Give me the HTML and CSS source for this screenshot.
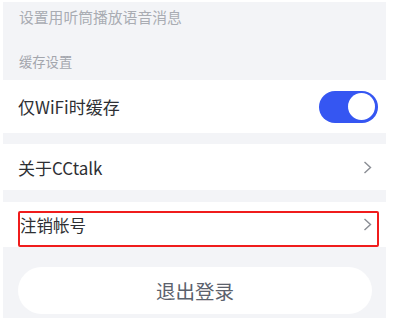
FILE: index.html
```html
<!DOCTYPE html>
<html lang="zh">
<head>
<meta charset="utf-8">
<link rel="stylesheet" href="styles.css">
</head>
<body>
<div class="app">
  <div class="hint">设置用听筒播放语音消息</div>
  <div class="section-title">缓存设置</div>
  <div class="row row-wifi">
    <span class="label">仅WiFi时缓存</span>
    <span class="toggle"><span class="knob"></span></span>
  </div>
  <div class="gap gap-a"></div>
  <div class="row row-about">
    <span class="label">关于CCtalk</span>
    <svg class="chev" width="9" height="13" viewBox="0 0 9 13"><path d="M1.5 1 L7.5 6.5 L1.5 12" fill="none" stroke="#8a8d94" stroke-width="1.4"/></svg>
  </div>
  <div class="gap gap-b"></div>
  <div class="row row-cancel">
    <span class="label label-cancel">注销帐号</span>
    <svg class="chev" width="9" height="13" viewBox="0 0 9 13"><path d="M1.5 1 L7.5 6.5 L1.5 12" fill="none" stroke="#8a8d94" stroke-width="1.4"/></svg>
    <div class="mark"></div>
  </div>
  <div class="btn-wrap">
    <div class="logout">退出登录</div>
  </div>
</div>
</body>
</html>
```

FILE: styles.css
```css
html, body {
  margin: 0;
  padding: 0;
  background: #ffffff;
}
body {
  font-family: "Noto Sans CJK SC", "Noto Sans", sans-serif;
  padding: 2px 14px 5px 3px;
}
.app {
  width: 383px;
  background: #f3f4f7;
}
.hint {
  height: 30px;
  line-height: 30px;
  font-size: 14.8px;
  color: #a9acb3;
  padding-left: 16px;
}
.section-title {
  padding: 20px 0 8px 16px;
  line-height: 20px;
  font-size: 13.3px;
  color: #a3a6ad;
}
.row {
  position: relative;
  background: #ffffff;
  display: flex;
  align-items: center;
  justify-content: space-between;
  padding: 0 14px 0 15px;
}
.label {
  font-size: 17px;
  color: #2e2f33;
}
.label-cancel {
  font-size: 16.5px;
  padding-left: 2px;
}
.row-wifi {
  height: 53px;
  padding-right: 8px;
}
.row-about {
  height: 46px;
}
.row-cancel {
  height: 45px;
}
.gap-a { height: 11px; }
.gap-b { height: 12px; }
.toggle {
  width: 59px;
  height: 32px;
  border-radius: 16px;
  background: #3556f2;
  display: flex;
  align-items: center;
  justify-content: flex-end;
  padding-right: 3px;
  box-sizing: border-box;
}
.knob {
  width: 27px;
  height: 27px;
  border-radius: 50%;
  background: #ffffff;
}
.chev {
  display: block;
}
.mark {
  position: absolute;
  left: 15px;
  top: 9px;
  width: 361px;
  height: 36px;
  border: 2px solid #f01c1c;
  border-radius: 2px;
  box-sizing: border-box;
}
.btn-wrap {
  padding: 20px 14px 4px 15px;
}
.logout {
  height: 47px;
  border-radius: 24px;
  background: #ffffff;
  display: flex;
  align-items: center;
  justify-content: center;
  font-size: 19.5px;
  color: #5b616c;
}
```
